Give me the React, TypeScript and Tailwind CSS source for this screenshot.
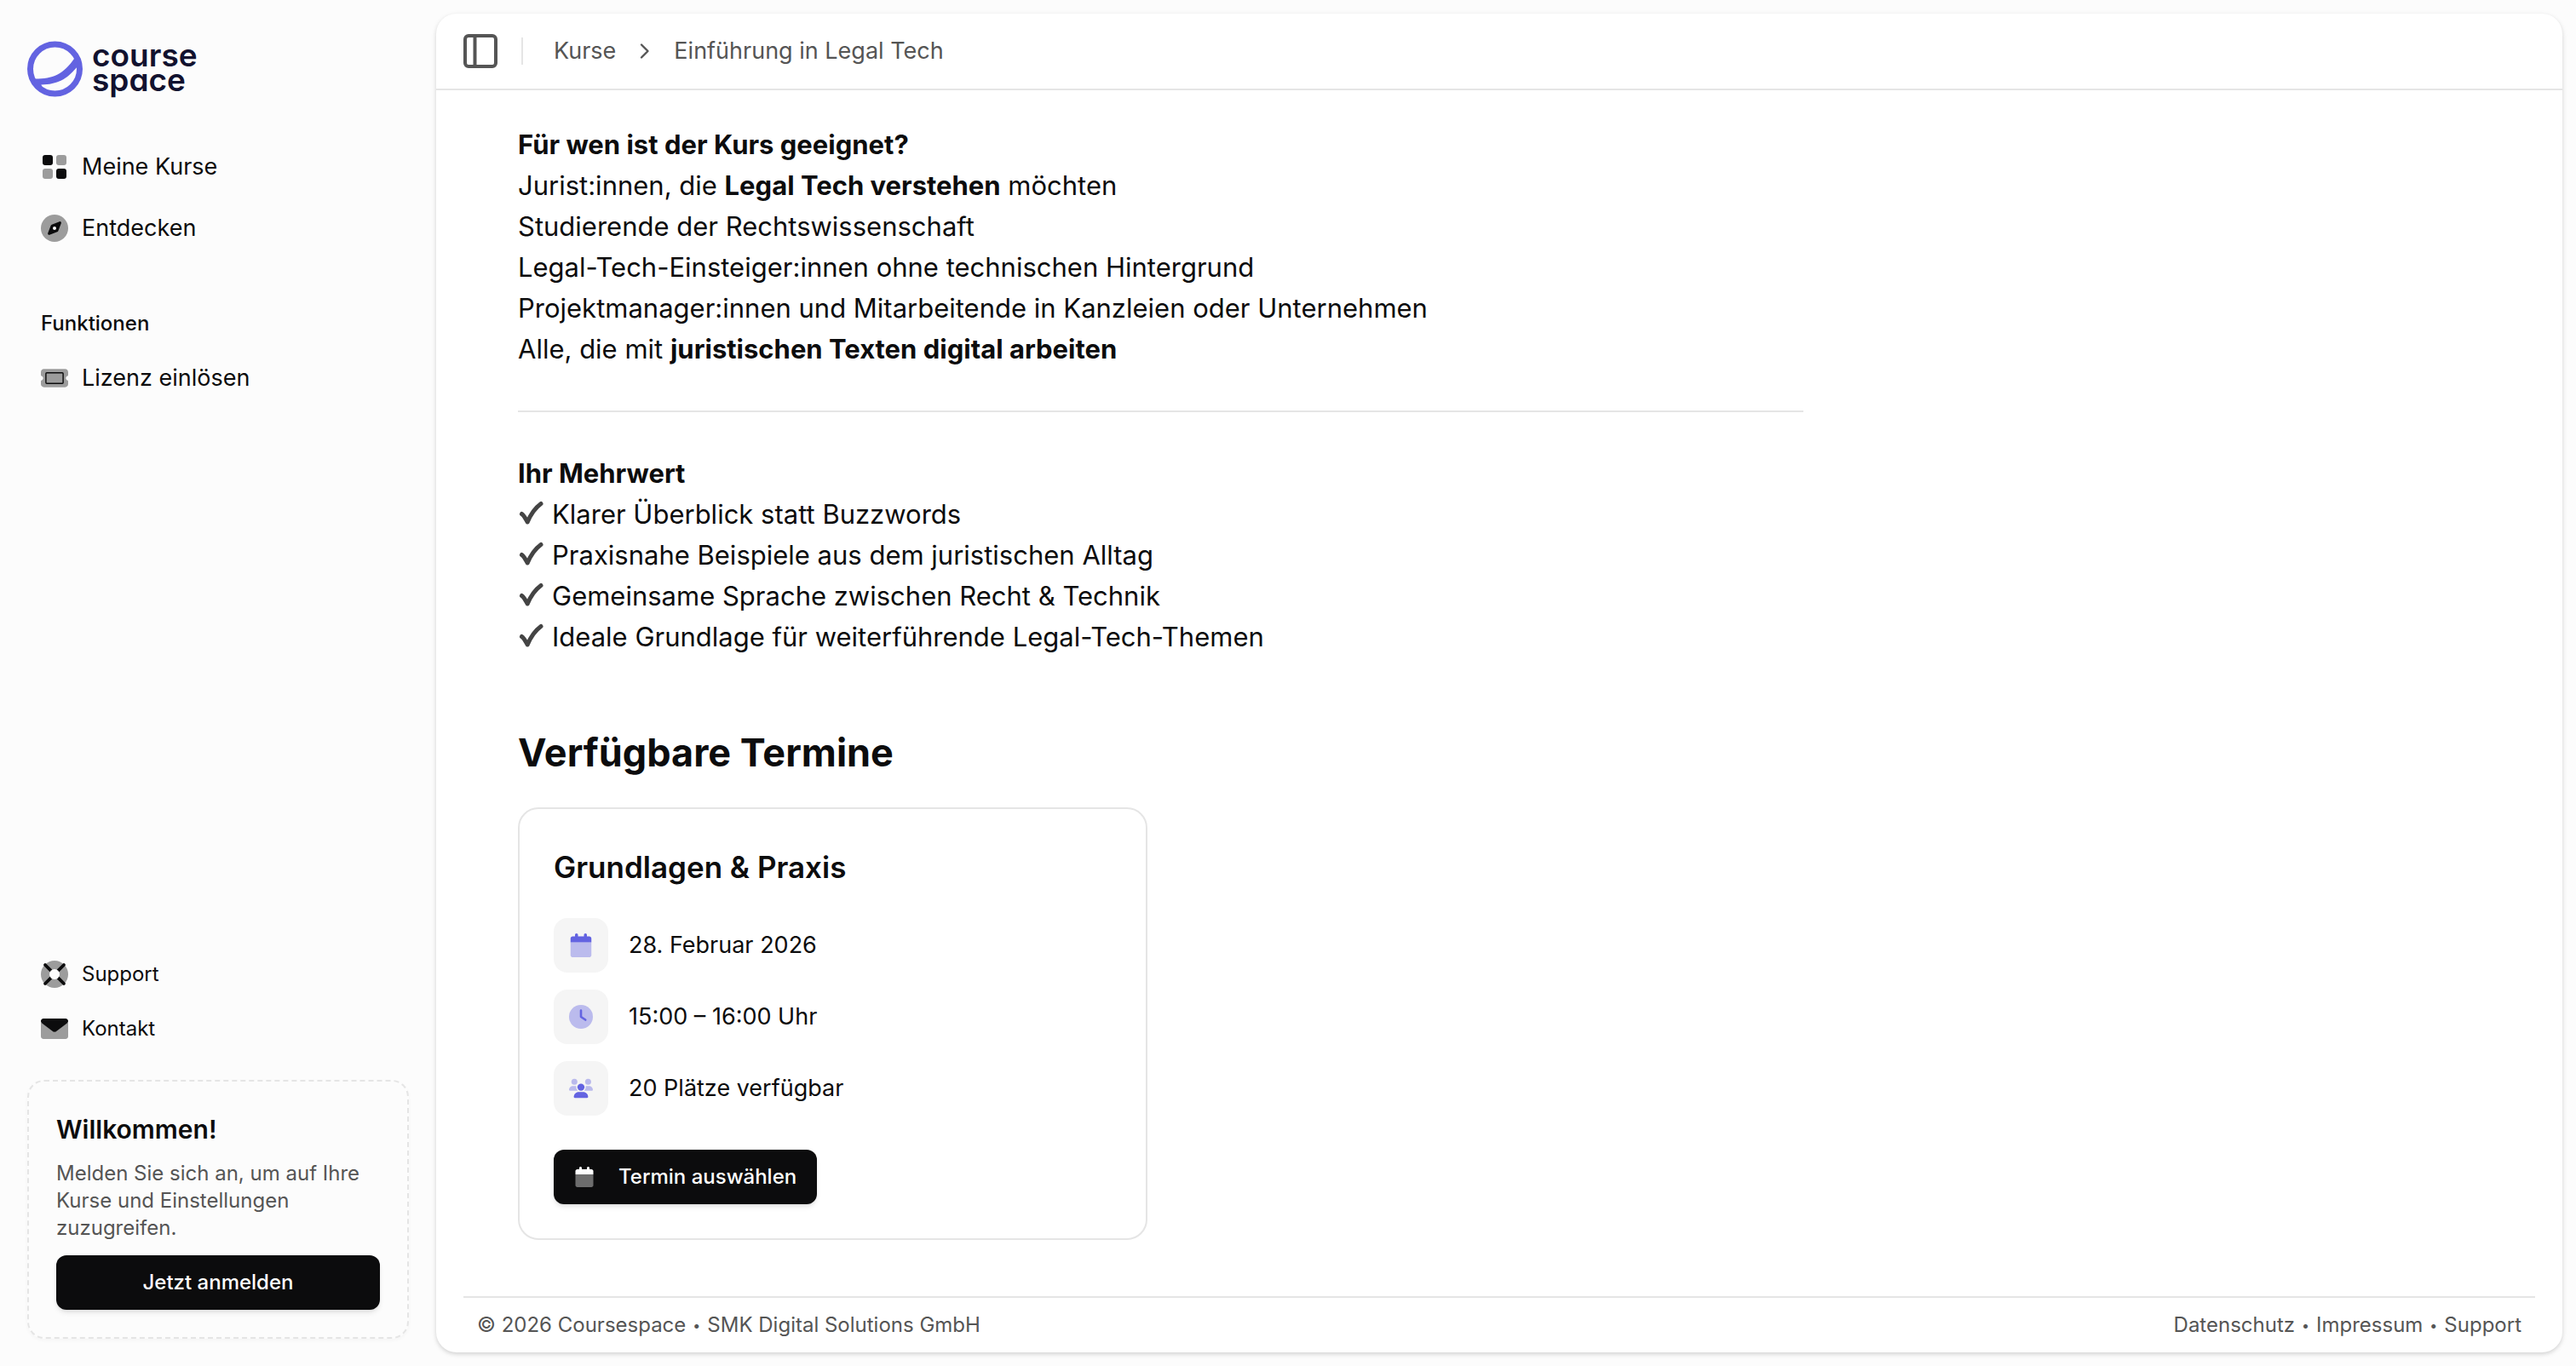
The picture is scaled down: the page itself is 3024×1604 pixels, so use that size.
import { ReactNode } from "react";
import clsx from "clsx";

type IconProps = { className?: string };

const navLinks: { title: string; url: string; icon: ReactNode }[] = [
  { title: "Meine Kurse", url: "#kurse", icon: <GridIcon className="size-8" /> },
  { title: "Entdecken", url: "#entdecken", icon: <CompassIcon className="size-8" /> },
];

const helpLinks: { title: string; url: string; icon: ReactNode }[] = [
  { title: "Support", url: "#support", icon: <LifeRingIcon className="size-8" /> },
  { title: "Kontakt", url: "#kontakt", icon: <EnvelopeIcon className="size-8" /> },
];

const benefits = [
  "Klarer Überblick statt Buzzwords",
  "Praxisnahe Beispiele aus dem juristischen Alltag",
  "Gemeinsame Sprache zwischen Recht & Technik",
  "Ideale Grundlage für weiterführende Legal-Tech-Themen",
];

const details: { text: string; icon: ReactNode }[] = [
  { text: "28. Februar 2026", icon: <CalendarIcon className="size-7" /> },
  { text: "15:00 – 16:00 Uhr", icon: <ClockIcon className="size-7" /> },
  { text: "20 Plätze verfügbar", icon: <UsersIcon className="size-7" /> },
];

export default function App() {
  return (
    <div className="flex min-h-screen bg-[#fcfcfc] font-['Inter',sans-serif] text-[#0c0c0d]">
      <Sidebar />
      <div className="my-4 mr-4 flex min-w-0 flex-1 flex-col rounded-3xl bg-white shadow-[0_2px_6px_rgba(0,0,0,0.1),0_2px_4px_rgba(0,0,0,0.08)]">
        <TopBar />
        <main className="grid flex-1 grid-cols-3 content-start gap-20 px-24 pt-10 pb-16">
          <div className="col-span-2">
            <CourseText />
            <h2 className="mt-20 text-[45px] leading-[64px] font-bold">Verfügbare Termine</h2>
            <div className="mt-8 grid grid-cols-2 gap-8">
              <EventCard />
            </div>
          </div>
        </main>
        <Footer />
      </div>
    </div>
  );
}

function Sidebar() {
  return (
    <aside className="flex w-[512px] shrink-0 flex-col p-8">
      <a href="#start" className="mt-4 flex items-center gap-2.5" aria-label="coursespace">
        <LogoMark className="size-[66px]" />
        <span className="pb-1 text-[37px] leading-[29px] font-semibold text-[#12122f] [font-feature-settings:'cv11']">
          course
          <br />
          space
        </span>
      </a>

      <nav className="mt-[50px] flex flex-col gap-2">
        {navLinks.map((item) => (
          <MenuLink key={item.url} {...item} />
        ))}
      </nav>

      <h2 className="mt-16 px-4 text-[24px] leading-[32px] font-medium">Funktionen</h2>
      <nav className="mt-4">
        <MenuLink title="Lizenz einlösen" url="#lizenz" icon={<TicketIcon className="size-8" />} />
      </nav>

      <nav className="mt-auto flex flex-col">
        {helpLinks.map((item) => (
          <MenuLink key={item.url} {...item} small />
        ))}
      </nav>

      <section className="mt-7 rounded-[20px] border-2 border-dashed border-[#e5e5e5] p-8 shadow-[0_2px_4px_rgba(0,0,0,0.03)]">
        <h2 className="text-[30px] leading-[48px] font-semibold">Willkommen!</h2>
        <p className="mt-3 text-[24px] leading-[32px] text-[#555555]">
          Melden Sie sich an, um auf Ihre Kurse und Einstellungen zuzugreifen.
        </p>
        <button
          type="button"
          className="mt-4 h-16 w-full cursor-pointer rounded-xl bg-[#0c0c0d] text-[24px] font-medium text-white shadow-md"
        >
          Jetzt anmelden
        </button>
      </section>
    </aside>
  );
}

function MenuLink({ title, url, icon, small }: { title: string; url: string; icon: ReactNode; small?: boolean }) {
  return (
    <a href={url} className={clsx("flex h-16 items-center gap-4 px-4", small ? "text-[24px]" : "text-[27px]")}>
      {icon}
      {title}
    </a>
  );
}

function TopBar() {
  return (
    <header className="flex h-[90px] items-center border-b-2 border-[#e5e5e5] px-8 text-[27px] text-[#555555]">
      <button type="button" aria-label="Seitenleiste umschalten" className="cursor-pointer">
        <PanelIcon className="size-10" />
      </button>
      <div className="mx-7 h-8 w-0.5 bg-[#e5e5e5]" />
      <nav className="ml-2 flex items-center gap-7">
        <a href="#kurse">Kurse</a>
        <svg viewBox="0 0 12 20" className="h-5 w-3" fill="none" stroke="currentColor" strokeWidth="2.4" strokeLinecap="round" strokeLinejoin="round">
          <path d="M2 2.5 9.500 10 2 17.500" />
        </svg>
        <span>Einführung in Legal Tech</span>
      </nav>
    </header>
  );
}

function CourseText() {
  return (
    <article className="text-[31px] leading-[48px]">
      <p>
        <strong>Für wen ist der Kurs geeignet?</strong>
        <br />
        Jurist:innen, die <strong>Legal Tech verstehen</strong> möchten
        <br />
        Studierende der Rechtswissenschaft
        <br />
        Legal-Tech-Einsteiger:innen ohne technischen Hintergrund
        <br />
        Projektmanager:innen und Mitarbeitende in Kanzleien oder Unternehmen
        <br />
        Alle, die mit <strong>juristischen Texten digital arbeiten</strong>
      </p>
      <hr className="my-12 border-t-2 border-[#e5e5e5]" />
      <p className="font-bold">Ihr Mehrwert</p>
      <ul>
        {benefits.map((text) => (
          <li key={text} className="flex items-center gap-2">
            <CheckMark className="size-8" />
            {text}
          </li>
        ))}
      </ul>
    </article>
  );
}

function EventCard() {
  return (
    <section className="rounded-3xl border-2 border-[#e5e5e5] p-10">
      <h3 className="text-[35px] leading-[56px] font-semibold">Grundlagen & Praxis</h3>
      <ul className="mt-8 flex flex-col gap-5">
        {details.map((item) => (
          <li key={item.text} className="flex items-center gap-6 text-[27px]">
            <span className="flex size-16 items-center justify-center rounded-2xl bg-[#f5f5f5] text-[#6363e1]">
              {item.icon}
            </span>
            {item.text}
          </li>
        ))}
      </ul>
      <button
        type="button"
        className="mt-10 flex h-16 cursor-pointer items-center gap-7 rounded-xl bg-[#0c0c0d] px-6 text-[24px] font-medium text-white shadow-md"
      >
        <CalendarIcon className="size-6" />
        Termin auswählen
      </button>
    </section>
  );
}

function Footer() {
  return (
    <footer className="mx-8 flex h-[66px] items-center justify-between border-t-2 border-[#e5e5e5] px-4 text-[24px] text-[#555555]">
      <p className="flex items-center gap-2">
        <span>© 2026 Coursespace</span>
        <span className="text-[16px]">•</span>
        <span>SMK Digital Solutions GmbH</span>
      </p>
      <nav className="flex items-center gap-2">
        <a href="#datenschutz">Datenschutz</a>
        <span className="text-[16px]">•</span>
        <a href="#impressum">Impressum</a>
        <span className="text-[16px]">•</span>
        <a href="#support">Support</a>
      </nav>
    </footer>
  );
}

function LogoMark({ className }: IconProps) {
  return (
    <svg viewBox="0 0 66 66" className={className} fill="none" stroke="#6363e1" aria-hidden="true">
      <circle cx="32.500" cy="33" r="29" strokeWidth="7" />
      <path d="M9.500 44.500 C30 44.500 42 40 55.500 20.300 L60 29 L57.300 32 C46 45 36 51 16.300 51.500 L18 55 L8 50 Z" fill="#6363e1" stroke="none" />
    </svg>
  );
}

function PanelIcon({ className }: IconProps) {
  return (
    <svg viewBox="0 0 40 40" className={className} fill="none" stroke="currentColor" strokeWidth="4">
      <rect x="2" y="2" width="36" height="36" rx="4" />
      <path d="M13.500 2v36" />
    </svg>
  );
}

function GridIcon({ className }: IconProps) {
  return (
    <svg viewBox="0 0 32 32" className={className} fill="currentColor">
      <rect x="2" y="2" width="12" height="12" rx="3" />
      <rect x="18" y="18" width="12" height="12" rx="3" />
      <rect x="18" y="2" width="12" height="12" rx="3" opacity="0.4" />
      <rect x="2" y="18" width="12" height="12" rx="3" opacity="0.4" />
    </svg>
  );
}

function CompassIcon({ className }: IconProps) {
  return (
    <svg viewBox="0 0 512 512" className={className} fill="currentColor">
      <circle cx="256" cy="256" r="256" opacity="0.4" />
      <path d="M306.700 325.100 162.400 380.600c-19.400 7.500-38.500-11.600-31-31l55.500-144.300c3.300-8.500 9.900-15.100 18.400-18.400l144.300-55.500c19.400-7.500 38.500 11.600 31 31L325.100 306.700c-3.200 8.500-9.900 15.100-18.400 18.400z" />
      <circle cx="256" cy="256" r="32" fill="#fcfcfc" />
    </svg>
  );
}

function TicketIcon({ className }: IconProps) {
  return (
    <svg viewBox="0 0 576 512" className={className} fill="currentColor">
      <path
        d="M64 64C28.700 64 0 92.700 0 128v64c0 8.800 7.400 15.700 15.700 18.600C34.500 217.100 48 235 48 256s-13.500 38.900-32.300 45.400C7.400 304.300 0 311.200 0 320v64c0 35.300 28.700 64 64 64h448c35.300 0 64-28.700 64-64v-64c0-8.800-7.400-15.700-15.700-18.600C541.500 294.900 528 277 528 256s13.500-38.900 32.300-45.400c8.300-2.900 15.700-9.800 15.700-18.600v-64c0-35.300-28.700-64-64-64z"
        opacity="0.4"
      />
      <rect x="106" y="144" width="364" height="224" rx="18" fill="none" stroke="currentColor" strokeWidth="26" />
    </svg>
  );
}

function LifeRingIcon({ className }: IconProps) {
  return (
    <svg viewBox="0 0 512 512" className={className} fill="currentColor">
      <circle cx="256" cy="256" r="256" opacity="0.4" />
      <path
        d="M80 80 182 182M432 80 330 182M80 432 182 330M432 432 330 330"
        stroke="currentColor"
        strokeWidth="60"
        strokeLinecap="round"
      />
      <circle cx="256" cy="256" r="96" fill="#fcfcfc" />
    </svg>
  );
}

function EnvelopeIcon({ className }: IconProps) {
  return (
    <svg viewBox="0 0 512 512" className={className} fill="currentColor">
      <path d="M0 136v264c0 26.500 21.500 48 48 48h416c26.500 0 48-21.500 48-48V136L256 320z" opacity="0.4" />
      <path d="M48 64C21.500 64 0 85.500 0 112c0 15 7.100 29.300 19.200 38.400L227 306c17 13 41 13 58 0l207.800-155.600C504.900 141.300 512 127 512 112c0-26.500-21.500-48-48-48z" />
    </svg>
  );
}

function CalendarIcon({ className }: IconProps) {
  return (
    <svg viewBox="0 0 512 512" className={className} fill="currentColor">
      <path d="M128 32v32H80c-26.500 0-48 21.500-48 48v80h448v-80c0-26.500-21.500-48-48-48h-48V32c0-17.700-14.300-32-32-32s-32 14.300-32 32v32H192V32c0-17.700-14.300-32-32-32s-32 14.300-32 32z" />
      <path d="M480 192H32v272c0 26.500 21.500 48 48 48h352c26.500 0 48-21.500 48-48z" opacity="0.4" />
    </svg>
  );
}

function ClockIcon({ className }: IconProps) {
  return (
    <svg viewBox="0 0 512 512" className={className}>
      <circle cx="256" cy="256" r="256" fill="currentColor" opacity="0.4" />
      <path d="M256 120v136l96 64" fill="none" stroke="currentColor" strokeWidth="48" strokeLinecap="round" strokeLinejoin="round" />
    </svg>
  );
}

function UsersIcon({ className }: IconProps) {
  return (
    <svg viewBox="0 0 640 512" className={className} fill="currentColor">
      <g opacity="0.4">
        <circle cx="144" cy="80" r="80" />
        <circle cx="512" cy="80" r="80" />
        <path d="M0 298.700C0 310.400 9.600 320 21.300 320h214c-26.600-23.500-43.300-57.800-43.300-96 0-7.600.7-15 1.900-22.300-13.600-6.300-28.700-9.700-44.600-9.700h-42.600C47.800 192 0 239.800 0 298.700z" />
        <path d="M405.300 320h213.400c11.800 0 21.300-9.600 21.300-21.300C640 239.800 592.200 192 533.300 192h-42.600c-15.900 0-31 3.500-44.600 9.700 1.300 7.200 1.900 14.700 1.900 22.300 0 38.200-16.800 72.500-42.700 96z" />
      </g>
      <circle cx="320" cy="224" r="96" />
      <path d="M128 485.300C128 411.700 187.700 352 261.300 352h117.400C452.300 352 512 411.700 512 485.300c0 14.700-11.900 26.700-26.700 26.700H154.700c-14.700 0-26.700-11.900-26.700-26.700z" />
    </svg>
  );
}

function CheckMark({ className }: IconProps) {
  return (
    <svg viewBox="0 0 32 32" className={className} fill="none" stroke="#444444" strokeWidth="5" strokeLinecap="round" strokeLinejoin="round" aria-hidden="true">
      <path d="M4.500 15.500c2.500 1.500 4.500 5.500 6.700 9.500 3.800-9 8.300-16 15.800-21.500" />
    </svg>
  );
}
